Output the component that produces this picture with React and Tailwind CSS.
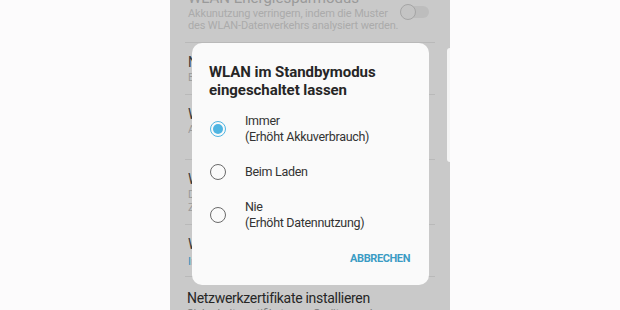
import { useState } from "react";

const options = [
  { id: "immer", lines: ["Immer", "(Erhöht Akkuverbrauch)"] },
  { id: "laden", lines: ["Beim Laden"] },
  { id: "nie", lines: ["Nie", "(Erhöht Datennutzung)"] },
];

const Radio = ({ checked }) =>
  checked ? (
    <span className="flex h-4 w-4 shrink-0 items-center justify-center rounded-full border-[1.5px] border-[#4fb5e2]">
      <span className="block h-[10px] w-[10px] rounded-full bg-[#4fb5e2]" />
    </span>
  ) : (
    <span className="block h-4 w-4 shrink-0 rounded-full border-[1.5px] border-[#6a6a6a]" />
  );

const SettingRow = ({ title, sub, blue, tall, oneLine }) => (
  <div
    className={`overflow-hidden border-b border-[#b9b9b9] pl-[3px] pr-[16px] ${tall ? "h-[65px]" : "h-[52px]"} pt-[10px]`}
  >
    <div className="truncate text-[14px] leading-[18px] text-[#3a3a3a]">{title}</div>
    {sub && (
      <div
        className={`text-[11px] leading-[13px] ${oneLine ? "truncate" : ""} ${blue ? "mt-[2px] text-[#2f8fb8]" : "text-[#9a9a9a]"}`}
      >
        {sub}
      </div>
    )}
  </div>
);

export default function App() {
  const [selected, setSelected] = useState("immer");

  return (
    <div className="flex h-[310px] w-[620px] overflow-hidden bg-[#fcfbfc] font-['Roboto',sans-serif]">
      <div className="w-[170px]" />
      <div className="relative h-full w-[280px] overflow-hidden bg-[#c9c9c9]">
        {/* settings list behind the dim */}
        <div className="mt-[-10px] px-[15px]">
          <div className="relative h-[53px] border-b border-[#b9b9b9] pl-[3px]">
            <div className="text-[15px] leading-[17px] text-[#9a9a9a]">
              WLAN Energiesparmodus
            </div>
            <div className="mt-[1px] text-[11px] leading-[11.5px] tracking-[-0.15px] text-[#ababab]">
              Akkunutzung verringern, indem die Muster
              <br />
              des WLAN-Datenverkehrs analysiert werden.
            </div>
            <div className="absolute right-[6px] top-[16px] flex h-[12px] w-[26px] items-center rounded-full bg-[#bdbdbd]">
              <span className="ml-[-3px] block h-[16px] w-[16px] rounded-full border-[1.5px] border-[#a5a5a5] bg-[#c4c4c4]" />
            </div>
          </div>
          <SettingRow title="Netzwerkbenachrichtigung" sub="Benachrichtigen, wenn offene Netzwerke verfügbar sind" oneLine />
          <SettingRow title="WLAN-Steuerungsverlauf" sub="Apps anzeigen, die WLAN zuletzt ein- oder ausgeschaltet haben" tall oneLine />
          <SettingRow title="WLAN Direct" sub="Direkte Verbindung zu Geräten ohne Zugangspunkt herstellen" tall />
          <SettingRow title="WLAN im Standbymodus eingeschaltet lassen" sub="Immer" blue />
          <div className="pl-[2px] pt-[12px]">
            <div className="text-[14px] leading-[18px] tracking-[-0.3px] text-[#262626]">
              Netzwerkzertifikate installieren
            </div>
            <div className="text-[11px] leading-[14px] text-[#7a7a7a]">
              Sicherheitszertifikate von Geräten und
            </div>
          </div>
        </div>

        <div className="absolute right-0 top-[48px] h-[114px] w-[3px] rounded-l-[3px] bg-[#f4f4f4]" />

        {/* dialog */}
        <div className="absolute left-[22px] top-[43px] flex h-[242px] w-[237px] flex-col rounded-[10px] bg-[#fafafa] pb-[11px] pl-[17px] pr-[19px] pt-[20px]">
          <h2 className="text-[15px] font-bold leading-[18px] tracking-[-0.05px] text-[#262626]">
            WLAN im Standbymodus
            <br />
            eingeschaltet lassen
          </h2>
          <div className="mt-[8px] flex flex-col">
            {options.map((o) => (
              <button
                key={o.id}
                type="button"
                onClick={() => setSelected(o.id)}
                className="flex h-[43px] items-center text-left"
              >
                <span className="ml-[1px] mr-[19px] block">
                  <Radio checked={selected === o.id} />
                </span>
                <span className="text-[12.5px] leading-[15.5px] tracking-[-0.3px] text-[#333]">
                  {o.lines.map((l) => (
                    <span key={l} className="block">
                      {l}
                    </span>
                  ))}
                </span>
              </button>
            ))}
          </div>
          <div className="mt-auto flex justify-end">
            <button
              type="button"
              className="h-[30px] text-[11px] font-bold tracking-[-0.4px] text-[#3b9cc4]"
            >
              ABBRECHEN
            </button>
          </div>
        </div>
      </div>
      <div className="flex-1" />
    </div>
  );
}
